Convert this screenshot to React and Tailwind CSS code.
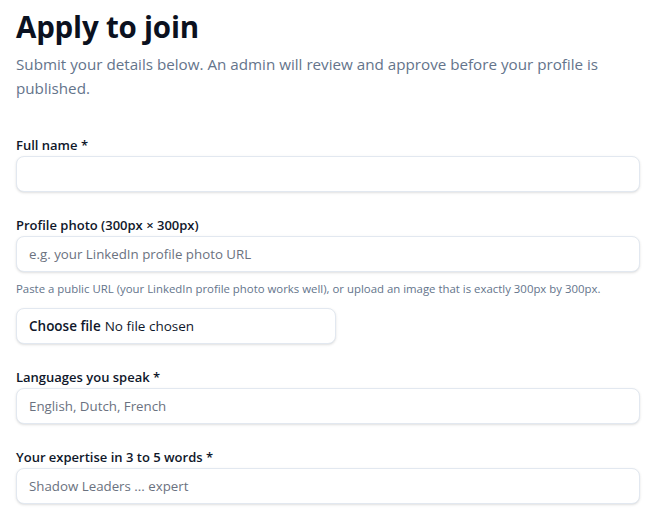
export default function App() {
  const font = { fontFamily: '"Open Sans", "Noto Sans", sans-serif' };
  const inputCls =
    "block w-full h-9 rounded-lg border border-[#e2e8f0] bg-white px-3 text-[13.3px] text-[#0f172a] shadow-sm outline-none placeholder:text-[#6b7280]";
  const labelCls = "block text-[13px] font-semibold text-[#0f172a] leading-5 mb-[1px]";
  return (
    <div className="min-h-screen bg-white" style={font}>
      <div className="px-4 pt-[8px]">
        <h1 className="text-[29.5px] font-bold leading-[38px] text-[#0b1120] tracking-[-0.2px]">Apply to join</h1>
        <p className="mt-[6px] text-[15.2px] leading-6 text-[#64748b]">
          Submit your details below. An admin will review and approve before your profile is published.
        </p>
        <form className="mt-[35px] flex flex-col gap-[23px]">
          <div>
            <label className={labelCls}>Full name *</label>
            <input type="text" className={inputCls} />
          </div>
          <div>
            <label className={labelCls}>Profile photo (300px × 300px)</label>
            <input type="text" className={inputCls} placeholder="e.g. your LinkedIn profile photo URL" />
            <p className="mt-[9px] text-[11.4px] leading-4 text-[#64748b]">
              Paste a public URL (your LinkedIn profile photo works well), or upload an image that is exactly 300px by 300px.
            </p>
            <div className="mt-[11px] flex h-9 w-[320px] items-center rounded-lg border border-[#e2e8f0] bg-white px-3 text-[13.5px] text-[#0f172a] shadow-sm">
              <span className="font-semibold">Choose file</span>
              <span className="ml-[4px]">No file chosen</span>
            </div>
          </div>
          <div>
            <label className={labelCls}>Languages you speak *</label>
            <input type="text" className={inputCls} placeholder="English, Dutch, French" />
          </div>
          <div>
            <label className={labelCls}>Your expertise in 3 to 5 words *</label>
            <input type="text" className={inputCls} placeholder="Shadow Leaders ... expert" />
          </div>
        </form>
      </div>
    </div>
  );
}
